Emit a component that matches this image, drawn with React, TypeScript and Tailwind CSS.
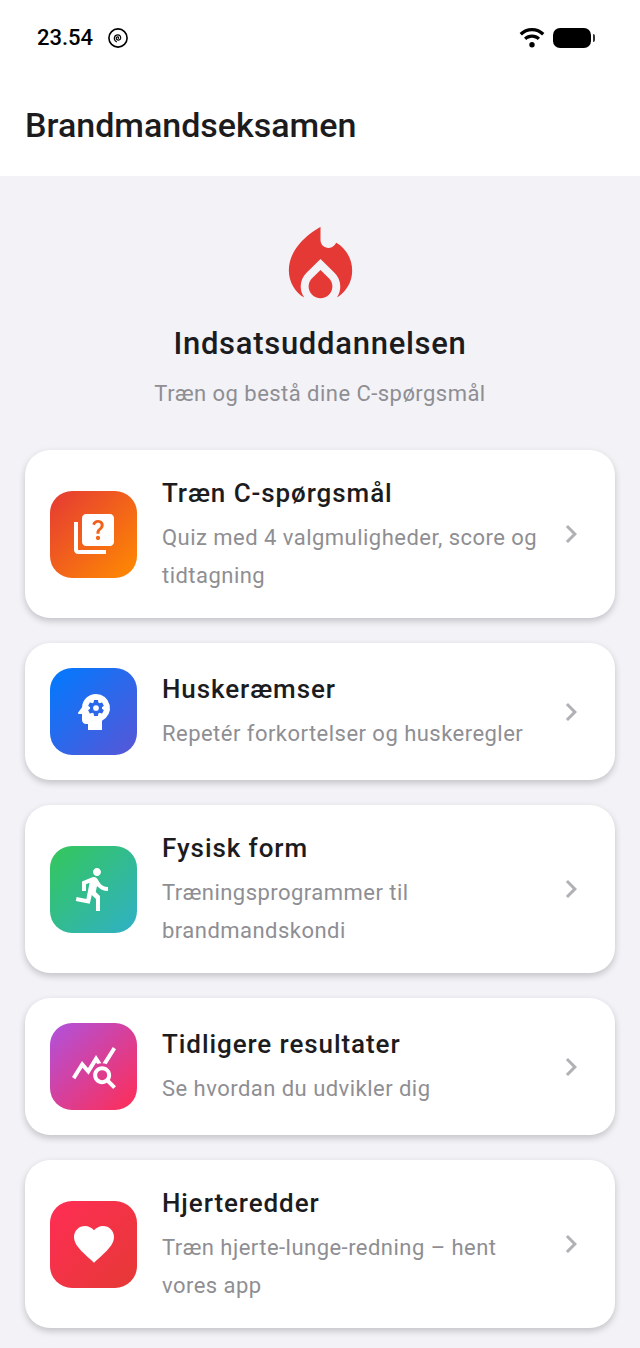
import { MdChevronRight, MdDirectionsRun, MdFavorite, MdLocalFireDepartment, MdPsychology, MdQueryStats, MdQuiz } from "react-icons/md"

const cards = [
    { title: "Træn C-spørgsmål", desc: "Quiz med 4 valgmuligheder, score og tidtagning", Icon: MdQuiz, tile: "from-[#e53935] to-[#ff8c00]" },
    { title: "Huskeræmser", desc: "Repetér forkortelser og huskeregler", Icon: MdPsychology, tile: "from-[#007aff] to-[#5856d6]" },
    { title: "Fysisk form", desc: "Træningsprogrammer til brandmandskondi", Icon: MdDirectionsRun, tile: "from-[#34c759] to-[#30b0c7]" },
    { title: "Tidligere resultater", desc: "Se hvordan du udvikler dig", Icon: MdQueryStats, tile: "from-[#af52de] to-[#ff2d55]" },
    { title: "Hjerteredder", desc: "Træn hjerte-lunge-redning – hent vores app", Icon: MdFavorite, tile: "from-[#ff2d55] to-[#e53935]" },
]

const StatusBar = () => (
    <div className="h-[76px] pl-[37px] pr-[45px] flex items-center justify-between">
        <div className="flex items-center gap-[15px]">
            <span className="text-[22px] leading-[26px] font-medium text-black">23.54</span>
            <svg width="20" height="20" viewBox="0 0 20 20" fill="none" stroke="#000">
                <circle cx="10" cy="10" r="9.100" strokeWidth="1.600" />
                <path d="M10.300 10.400c.6-.6.100-1.600-.8-1.500-1.300.2-1.700 1.800-.7 2.700 1.300 1 3.300.5 3.800-1.100.5-1.900-.9-3.600-2.800-3.600-1.600 0-2.900 1-3.300 2.300-.5 1.900.3 3.700 2 4.500" strokeWidth="1.200" strokeLinecap="round" />
            </svg>
        </div>
        <div className="flex items-center gap-[8px]">
            <svg width="26" height="20" viewBox="0 0 26 20" fill="#000">
                <path d="M13 0C8.100 0 3.800 1.900.6 5l2.300 2.400C5.500 4.900 9.100 3.300 13 3.300s7.500 1.600 10.100 4.100L25.400 5C22.200 1.900 17.900 0 13 0z" />
                <path d="M13 6.500c-3.100 0-5.900 1.200-8 3.200l2.300 2.400c1.500-1.400 3.500-2.300 5.700-2.300s4.200.9 5.700 2.300L21 9.700c-2.100-2-4.900-3.200-8-3.200z" />
                <circle cx="13" cy="16.800" r="2.700" />
            </svg>
            <div className="flex items-center gap-[2px]">
                <div className="w-[38px] h-[20px] rounded-[7px] bg-black" />
                <div className="w-[2px] h-[8px] rounded-r-full bg-[#333]" />
            </div>
        </div>
    </div>
)

export default function App() {
    return (
        <div className="h-[1348px] overflow-hidden bg-[#f2f2f7] font-['Roboto',sans-serif]">
            <div className="bg-white h-[176px]">
                <StatusBar />
                <h1 className="pl-[25px] mt-[29px] text-[34px] leading-[40px] font-medium text-[#1c1c1e]">Brandmandseksamen</h1>
            </div>
            <div className="px-[25px]">
                <div className="flex flex-col items-center">
                    <MdLocalFireDepartment size={95} color="#e53935" className="mt-[43px]" />
                    <h2 className="mt-[12px] text-[31px] leading-[36px] font-medium tracking-[0.72px] text-[#1c1c1e]">Indsatsuddannelsen</h2>
                    <p className="mt-[17px] text-[22px] leading-[30px] tracking-[0.46px] text-[#8e8e93]">Træn og bestå dine C-spørgsmål</p>
                </div>
                <div className="mt-[41px] flex flex-col gap-[25px]">
                    {cards.map(({ title, desc, Icon, tile }) => (
                        <div key={title} className="bg-white rounded-[25px] p-[25px] flex items-center shadow-[0_3px_7px_rgba(0,0,0,0.2)]">
                            <div className={`w-[87px] h-[87px] shrink-0 rounded-[22px] bg-linear-to-br/srgb ${tile} flex items-center justify-center`}>
                                <Icon size={48} color="#fff" />
                            </div>
                            <div className="ml-[25px] flex-1 min-w-0 -mb-[1px]">
                                <h3 className="text-[26px] leading-[36px] font-medium tracking-[0.92px] text-[#1c1c1e]">{title}</h3>
                                <p className="mt-[8px] text-[22px] leading-[37.5px] tracking-[0.47px] text-[#8e8e93]">{desc}</p>
                            </div>
                            <MdChevronRight size={36} color="#b0b0b5" className="ml-[2px] mr-[1px] shrink-0" />
                        </div>
                    ))}
                </div>
            </div>
        </div>
    )
}
